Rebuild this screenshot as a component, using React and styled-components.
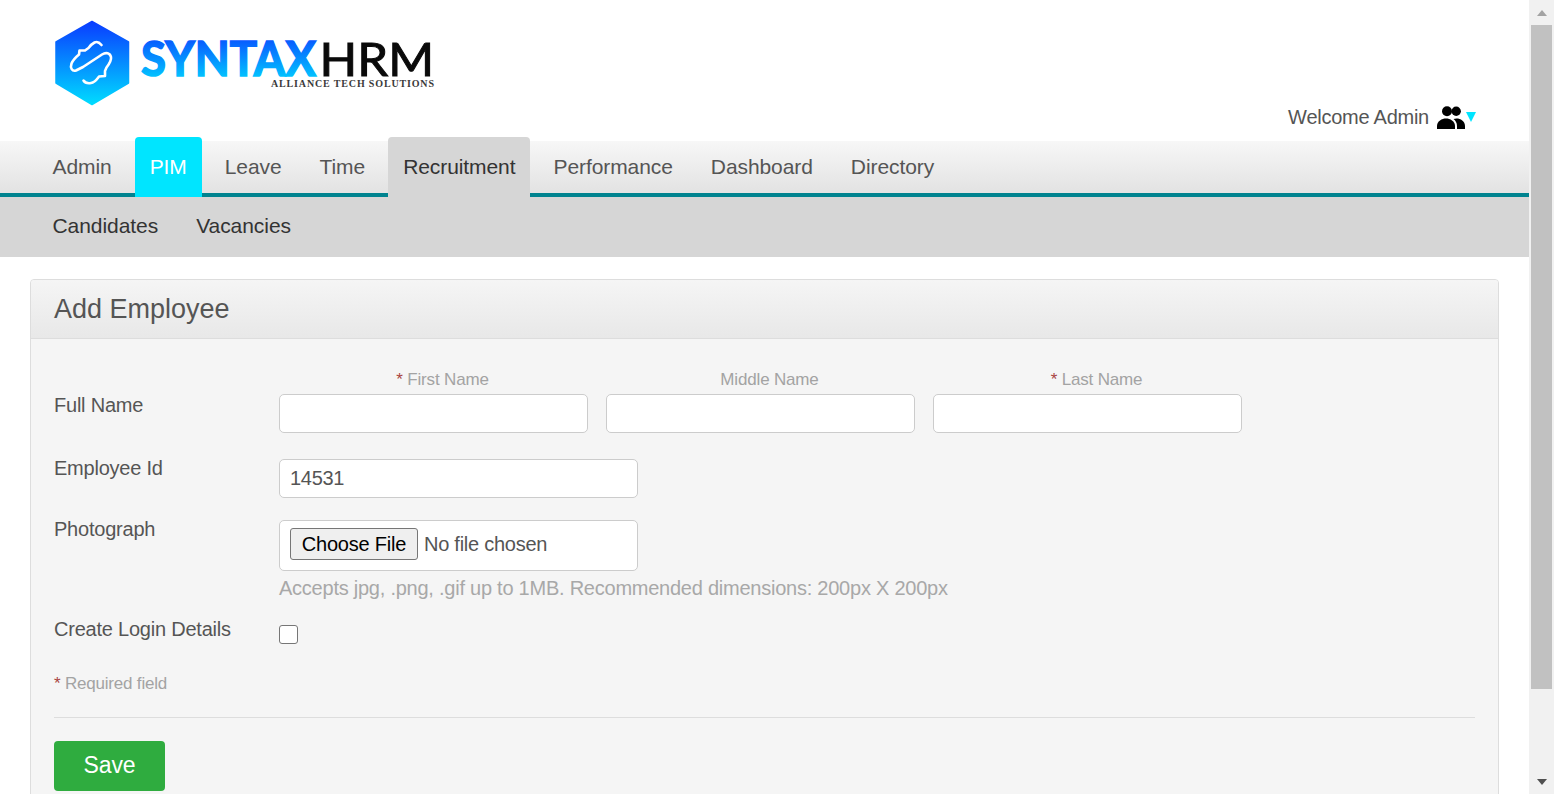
import React from 'react'
import styled, { createGlobalStyle } from 'styled-components'

const GlobalStyle = createGlobalStyle`
  html, body { margin: 0; padding: 0; height: 100%; overflow: hidden; background: #fff; }
  body { font-family: "Liberation Sans", Arial, sans-serif; color: #555; }
  * { box-sizing: border-box; }
`

const Page = styled.div`
  display: flex;
  height: 794px;
  overflow: hidden;
`

const Main = styled.div`
  flex: 1;
  min-width: 0;
`

const Header = styled.header`
  height: 141px;
  display: flex;
  justify-content: space-between;
  align-items: flex-end;
  padding: 0 53px 12px 50px;
`

const LogoWrap = styled.div`
  align-self: flex-start;
  margin-top: 16px;
  line-height: 0;
`

const Welcome = styled.div`
  display: flex;
  align-items: center;
  font-size: 20px;
  letter-spacing: -0.25px;
  color: #555;
`

const UserIcon = styled.svg`
  width: 28px;
  height: 23px;
  margin-left: 8px;
  fill: #000;
`

const Caret = styled.span`
  width: 0;
  height: 0;
  border-left: 5px solid transparent;
  border-right: 5px solid transparent;
  border-top: 10px solid #00e5ff;
  margin-left: 1px;
  margin-top: -2px;
`

const NavBar = styled.nav`
  height: 56px;
  display: flex;
  align-items: flex-end;
  padding-left: 37.5px;
  background: linear-gradient(#f7f7f7, #e4e4e4 48px);
  box-shadow: inset 0 -4px 0 #00838f;
`

const Tab = styled.a`
  height: 60px;
  margin-right: 8px;
  padding: 0 15px;
  display: flex;
  align-items: center;
  font-size: 21px;
  letter-spacing: -0.08px;
  border-radius: 4px 4px 0 0;
  color: ${p => (p.$variant === 'pim' ? '#fff' : p.$variant === 'open' ? '#333' : '#555')};
  background: ${p => (p.$variant === 'pim' ? '#00e5ff' : p.$variant === 'open' ? '#d6d6d6' : 'transparent')};
`

const SubNav = styled.div`
  height: 60px;
  display: flex;
  align-items: center;
  gap: 38px;
  padding: 0 0 3px 52.5px;
  background: #d6d6d6;
  font-size: 21px;
  letter-spacing: -0.06px;
  color: #333;
`

const Panel = styled.section`
  margin: 22px 30px 0;
  background: #f5f5f5;
  border: 1px solid #ddd;
  border-radius: 4px;
  height: 600px;
`

const PanelHeading = styled.h1`
  margin: 0;
  height: 59px;
  padding: 0 23px;
  display: flex;
  align-items: center;
  font-size: 27px;
  font-weight: 400;
  color: #555;
  background: linear-gradient(#f5f5f5, #e8e8e8);
  border-bottom: 1px solid #ddd;
  border-radius: 3px 3px 0 0;
`

const PanelBody = styled.div`
  padding: 31px 23px 0;
`

const Row = styled.div`
  display: flex;
  margin-bottom: ${p => p.$mb || 0}px;
`

const Label = styled.label`
  width: 225px;
  flex: none;
  font-size: 20px;
  line-height: 24px;
  color: #555;
  letter-spacing: -0.22px;
  margin-top: ${p => p.$top || 0}px;
`

const NameFields = styled.div`
  display: flex;
  gap: 18px;
`

const NameField = styled.div`
  width: 309px;
  display: flex;
  flex-direction: column;
`

const Caption = styled.span`
  display: block;
  height: 24px;
  font-size: 17px;
  line-height: 20px;
  letter-spacing: -0.17px;
  text-align: center;
  color: #a3a3a3;
  padding-left: 18px;
`

const Star = styled.span`
  color: #a94442;
`

const Input = styled.input`
  display: block;
  width: ${p => (p.$wide ? '359px' : '100%')};
  height: 39px;
  padding: 0 10px;
  font: 20px "Liberation Sans", Arial, sans-serif;
  letter-spacing: -0.3px;
  color: #555;
  background: #fff;
  border: 1px solid #ccc;
  border-radius: 5px;
  outline: none;
`

const FileBox = styled.div`
  width: 359px;
  height: 51px;
  padding: 7px 10px 0;
  background: #fff;
  border: 1px solid #ccc;
  border-radius: 5px;
`

const FileInput = styled.input`
  display: block;
  width: 335px;
  font: 20px "Liberation Sans", Arial, sans-serif;
  letter-spacing: -0.25px;
  color: #555;
  &::file-selector-button {
    width: 128px;
    height: 32px;
    margin-right: 6px;
    padding: 0;
    font: 20px "Liberation Sans", Arial, sans-serif;
    letter-spacing: -0.2px;
    color: #000;
    background: #efefef;
    border: 1px solid #767676;
    border-radius: 3px;
  }
`

const Hint = styled.p`
  margin: 5px 0 0;
  font-size: 20px;
  line-height: 24px;
  letter-spacing: -0.24px;
  color: #a8a8a8;
`

const Checkbox = styled.input`
  appearance: none;
  display: block;
  width: 19px;
  height: 19px;
  margin: 8px 0 0;
  background: #fff;
  border: 1px solid #767676;
  border-radius: 3px;
`

const Required = styled.div`
  margin-top: 30px;
  font-size: 17px;
  line-height: 20px;
  letter-spacing: -0.2px;
  color: #a3a3a3;
`

const Divider = styled.hr`
  margin: 23px 0 23px;
  border: 0;
  border-top: 1px solid #ddd;
`

const SaveButton = styled.button`
  display: block;
  width: 111px;
  height: 50px;
  padding: 0 0 2px;
  font: 23px "Liberation Sans", Arial, sans-serif;
  letter-spacing: -0.05px;
  color: #fff;
  background: #2fac3f;
  border: 0;
  border-radius: 4px;
`

const ScrollTrack = styled.aside`
  width: 25px;
  flex: none;
  padding: 0 2px;
  background: #f1f1f1;
  display: flex;
  flex-direction: column;
  align-items: stretch;
`

const ScrollArrow = styled.div`
  height: 25px;
  display: flex;
  align-items: center;
  justify-content: center;
  margin-top: ${p => (p.$down ? 'auto' : '0')};
`

const Thumb = styled.div`
  height: 664px;
  background: #c1c1c1;
`

const logoBlue = 'logoBlue'

function Logo() {
  return (
    <svg width="400" height="95" viewBox="0 0 400 95" fontFamily="Lato, sans-serif">
      <defs>
        <linearGradient id={logoBlue} x1="0" y1="0" x2="0" y2="1">
          <stop offset="0" stopColor="#0a3cff" />
          <stop offset="1" stopColor="#00dcff" />
        </linearGradient>
      </defs>
      <path d="M42 5.5 L78.5 26 L78.5 67 L42 88.5 L6 67 L6 26 Z" fill={`url(#${logoBlue})`} stroke={`url(#${logoBlue})`} strokeWidth="1.5" strokeLinejoin="round" />
      <path
        d="M51.5 29 C49 26 46.5 25.5 44.5 26.5 C41.5 28 40 30 38.5 32 L35 34.5 L29.5 34.5 L29 38.5 C26 41 23 44 21.5 47.5 C20 52 22 55.5 26 54.5 L33 51 L52 38.5 C56 36 60 37 61 41 C61.5 44 60 47 56.5 51.5 L55 55 V60 L49 60.5 C47 63 45 66.5 41 67 C38 67.5 35 67 33.5 64.5"
        fill="none"
        stroke="#fff"
        strokeWidth="2.6"
        strokeLinecap="round"
        strokeLinejoin="round"
      />
      <text x="91" y="60" fontSize="48" fontWeight="700" fill={`url(#${logoBlue})`} stroke={`url(#${logoBlue})`} strokeWidth="1.6" textLength="175" lengthAdjust="spacingAndGlyphs">SYNTAX</text>
      <text x="269.5" y="60" fontSize="47" fontWeight="400" fill="#0a0a0a" stroke="#0a0a0a" strokeWidth="1" textLength="114.5" lengthAdjust="spacingAndGlyphs">HRM</text>
      <text x="221" y="71" fontSize="10" fontWeight="700" fontFamily="'Liberation Serif', serif" fill="#3a3a3a" textLength="163" lengthAdjust="spacing">ALLIANCE TECH SOLUTIONS</text>
    </svg>
  )
}

export default function App() {
  return (
    <Page>
      <GlobalStyle />
      <Main>
        <Header>
          <LogoWrap><Logo /></LogoWrap>
          <Welcome>
            Welcome Admin
            <UserIcon viewBox="0 0 28 23">
              <circle cx="10" cy="5.2" r="5" />
              <circle cx="19.2" cy="5.2" r="4.7" />
              <path d="M0 23 V20 C0 15 5 12.5 9 12.5 C13 12.5 18 15 18 20 V23 Z" />
              <path d="M20 23 V20 C20 17 18.5 14.5 16.5 13 C17.5 12.7 18.5 12.5 19.5 12.5 C23.5 12.5 28 15 28 20 V23 Z" />
            </UserIcon>
            <Caret />
          </Welcome>
        </Header>
        <NavBar>
          <Tab>Admin</Tab>
          <Tab $variant="pim">PIM</Tab>
          <Tab>Leave</Tab>
          <Tab>Time</Tab>
          <Tab $variant="open">Recruitment</Tab>
          <Tab>Performance</Tab>
          <Tab>Dashboard</Tab>
          <Tab>Directory</Tab>
        </NavBar>
        <SubNav>
          <span>Candidates</span>
          <span>Vacancies</span>
        </SubNav>
        <Panel>
          <PanelHeading>Add Employee</PanelHeading>
          <PanelBody>
            <Row $mb={26}>
              <Label $top={23}>Full Name</Label>
              <NameFields>
                <NameField>
                  <Caption><Star>*</Star> First Name</Caption>
                  <Input />
                </NameField>
                <NameField>
                  <Caption>Middle Name</Caption>
                  <Input />
                </NameField>
                <NameField>
                  <Caption><Star>*</Star> Last Name</Caption>
                  <Input />
                </NameField>
              </NameFields>
            </Row>
            <Row $mb={22}>
              <Label $top={-3}>Employee Id</Label>
              <Input $wide defaultValue="14531" />
            </Row>
            <Row $mb={17}>
              <Label $top={-3}>Photograph</Label>
              <div>
                <FileBox><FileInput type="file" /></FileBox>
                <Hint>Accepts jpg, .png, .gif up to 1MB. Recommended dimensions: 200px X 200px</Hint>
              </div>
            </Row>
            <Row>
              <Label>Create Login Details</Label>
              <Checkbox type="checkbox" />
            </Row>
            <Required><Star>*</Star> Required field</Required>
            <Divider />
            <SaveButton>Save</SaveButton>
          </PanelBody>
        </Panel>
      </Main>
      <ScrollTrack>
        <ScrollArrow>
          <svg width="12" height="8" viewBox="0 0 12 8"><path d="M6 1 L11 7 L1 7 Z" fill="#a3a3a3" /></svg>
        </ScrollArrow>
        <Thumb />
        <ScrollArrow $down>
          <svg width="12" height="8" viewBox="0 0 12 8"><path d="M1 1 L11 1 L6 7 Z" fill="#505050" /></svg>
        </ScrollArrow>
      </ScrollTrack>
    </Page>
  )
}
